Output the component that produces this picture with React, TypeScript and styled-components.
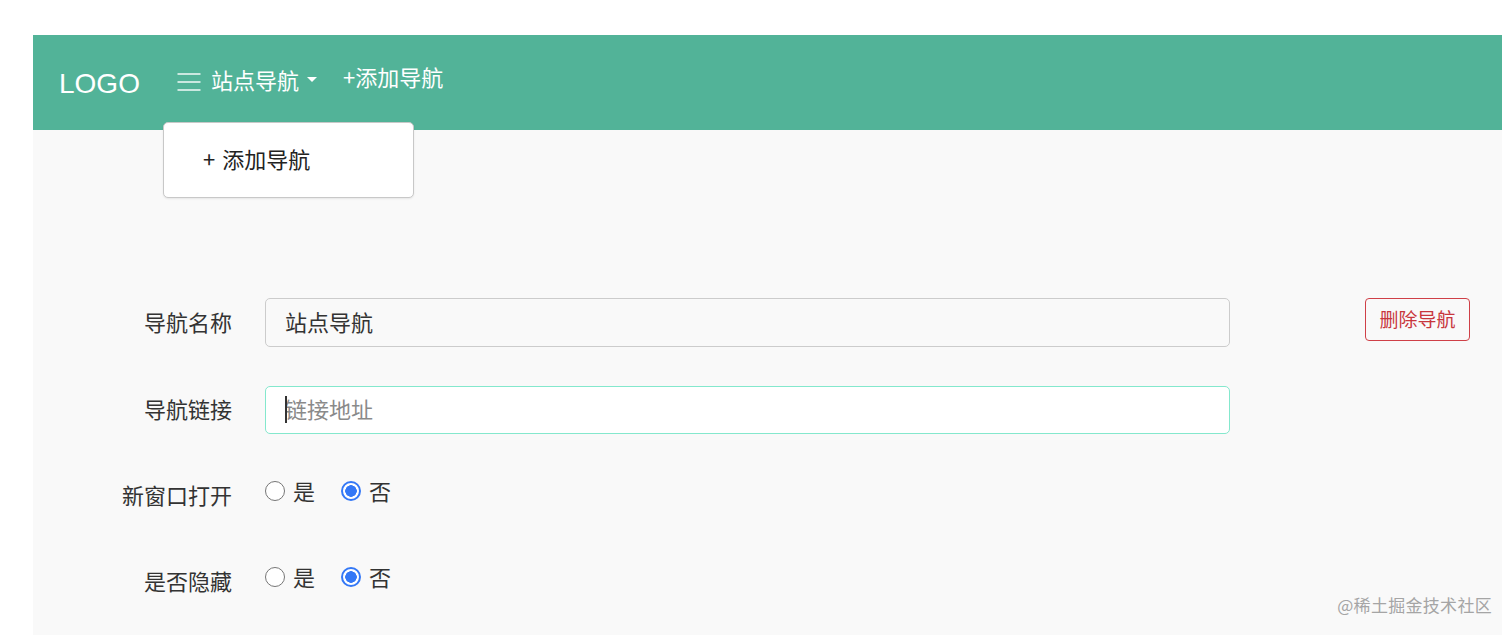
import React from "react";
import styled, { createGlobalStyle } from "styled-components";

const Global = createGlobalStyle`
  html, body { margin: 0; padding: 0; background: #ffffff; overflow: hidden; }
  body { font-family: "Noto Sans CJK SC", "Noto Sans", sans-serif; color: #333; }
  * { box-sizing: border-box; }
`;

const Page = styled.div`
  padding: 35px 0 0 33px;
  width: 1502px;
  height: 635px;
`;

const Shell = styled.div`
  width: 1469px;
  display: flex;
  flex-direction: column;
`;

const Header = styled.header`
  position: relative;
  height: 95px;
  background: #52b398;
  display: flex;
  align-items: center;
  padding-left: 26px;
  color: #ffffff;
`;

const Logo = styled.div`
  font-family: "Liberation Sans", Arial, sans-serif;
  font-size: 28px;
  margin-right: 37px;
  margin-top: 2px;
`;

const NavItem = styled.div<{ $lift: number }>`
  display: flex;
  align-items: center;
  font-size: 22px;
  line-height: 1;
  margin-bottom: ${(p) => p.$lift}px;
  margin-right: 26px;
  cursor: pointer;
`;

const Burger = styled.svg`
  width: 24px;
  height: 22px;
  margin-right: 10px;
  margin-top: 6px;
`;

const Caret = styled.span`
  width: 0;
  height: 0;
  border-left: 5px solid transparent;
  border-right: 5px solid transparent;
  border-top: 5px solid #ffffff;
  margin-left: 8px;
  margin-top: 1px;
`;

const Menu = styled.div`
  position: absolute;
  left: 130px;
  top: 87px;
  width: 251px;
  height: 76px;
  background: #ffffff;
  border: 1px solid #c8c8c8;
  border-radius: 5px;
  box-shadow: 0 1px 2px rgba(0, 0, 0, 0.08);
  display: flex;
  align-items: center;
  padding: 0 0 4px 39px;
  font-size: 22px;
  color: #222;
  z-index: 2;
  word-spacing: 2px;
`;

const Panel = styled.main`
  background: #f9f9f9;
  height: 505px;
  padding-top: 168px;
  position: relative;
`;

const Row = styled.div<{ $mt: number; $h: number }>`
  display: grid;
  grid-template-columns: 199px 965px 1fr;
  column-gap: 33px;
  align-items: center;
  margin-top: ${(p) => p.$mt}px;
  height: ${(p) => p.$h}px;
`;

const Label = styled.label<{ $drop: number }>`
  text-align: right;
  font-size: 22px;
  line-height: 1;
  color: #333;
  margin-top: ${(p) => p.$drop}px;
`;

const Field = styled.div`
  position: relative;
  height: 100%;
`;

const Input = styled.input<{ $focus?: boolean }>`
  width: 100%;
  height: 100%;
  border: 1px solid ${(p) => (p.$focus ? "#84e8cd" : "#cccccc")};
  border-radius: 5px;
  background: ${(p) => (p.$focus ? "#ffffff" : "#f9f9f9")};
  padding: 0 19px 4px;
  font-family: "Noto Sans CJK SC", "Noto Sans", sans-serif;
  font-size: 22px;
  color: #333;
  outline: none;
  &::placeholder { color: #8a8a8a; }
`;

const TextCaret = styled.span`
  position: absolute;
  left: 20px;
  top: 10px;
  width: 1.5px;
  height: 27px;
  background: #333;
`;

const Actions = styled.div`
  display: flex;
  justify-content: flex-end;
  padding-right: 32px;
  align-self: start;
`;

const DangerButton = styled.button`
  width: 105px;
  height: 43px;
  border: 1px solid #cf4047;
  border-radius: 4px;
  background: transparent;
  color: #c8363d;
  font-family: "Noto Sans CJK SC", "Noto Sans", sans-serif;
  font-size: 19px;
  padding: 0 0 2px;
`;

const Radios = styled.div`
  display: flex;
  align-items: center;
`;

const Option = styled.label`
  display: flex;
  align-items: center;
  font-size: 22px;
  line-height: 1;
  color: #333;
  margin-right: 26px;
`;

const OptionText = styled.span`
  margin-top: -3px;
`;

const Radio = styled.input.attrs({ type: "radio" })`
  appearance: none;
  width: 20px;
  height: 20px;
  margin: 0 8px 0 0;
  border-radius: 50%;
  border: 1px solid #767676;
  background: #ffffff;
  &:checked {
    border: 2px solid #3478f6;
    background: radial-gradient(circle, #3478f6 0 5.5px, #ffffff 6px);
  }
`;

const Watermark = styled.div`
  position: absolute;
  right: 10px;
  bottom: 18px;
  font-size: 17px;
  color: #a5a5a5;
  letter-spacing: 0.3px;
`;

export default function App() {
  return (
    <Page>
      <Global />
      <Shell>
        <Header>
          <Logo>LOGO</Logo>
          <NavItem $lift={8}>
            <Burger viewBox="0 0 24 22" fill="none" stroke="#ffffff" strokeWidth="1.4">
              <line x1="0.5" y1="3" x2="23.5" y2="3" />
              <line x1="0.5" y1="11" x2="23.5" y2="11" />
              <line x1="0.5" y1="19" x2="23.5" y2="19" />
            </Burger>
            站点导航
            <Caret />
          </NavItem>
          <NavItem $lift={14}>+添加导航</NavItem>
          <Menu>+ 添加导航</Menu>
        </Header>
        <Panel>
          <Row $mt={0} $h={49}>
            <Label $drop={-4}>导航名称</Label>
            <Field>
              <Input defaultValue="站点导航" readOnly />
            </Field>
            <Actions>
              <DangerButton>删除导航</DangerButton>
            </Actions>
          </Row>
          <Row $mt={39} $h={48}>
            <Label $drop={-4}>导航链接</Label>
            <Field>
              <Input $focus placeholder="链接地址" readOnly />
              <TextCaret />
            </Field>
            <div />
          </Row>
          <Row $mt={37} $h={40}>
            <Label $drop={6}>新窗口打开</Label>
            <Radios>
              <Option>
                <Radio name="newWin" />
                <OptionText>是</OptionText>
              </Option>
              <Option>
                <Radio name="newWin" defaultChecked />
                <OptionText>否</OptionText>
              </Option>
            </Radios>
            <div />
          </Row>
          <Row $mt={46} $h={40}>
            <Label $drop={6}>是否隐藏</Label>
            <Radios>
              <Option>
                <Radio name="hidden" />
                <OptionText>是</OptionText>
              </Option>
              <Option>
                <Radio name="hidden" defaultChecked />
                <OptionText>否</OptionText>
              </Option>
            </Radios>
            <div />
          </Row>
          <Watermark>@稀土掘金技术社区</Watermark>
        </Panel>
      </Shell>
    </Page>
  );
}
